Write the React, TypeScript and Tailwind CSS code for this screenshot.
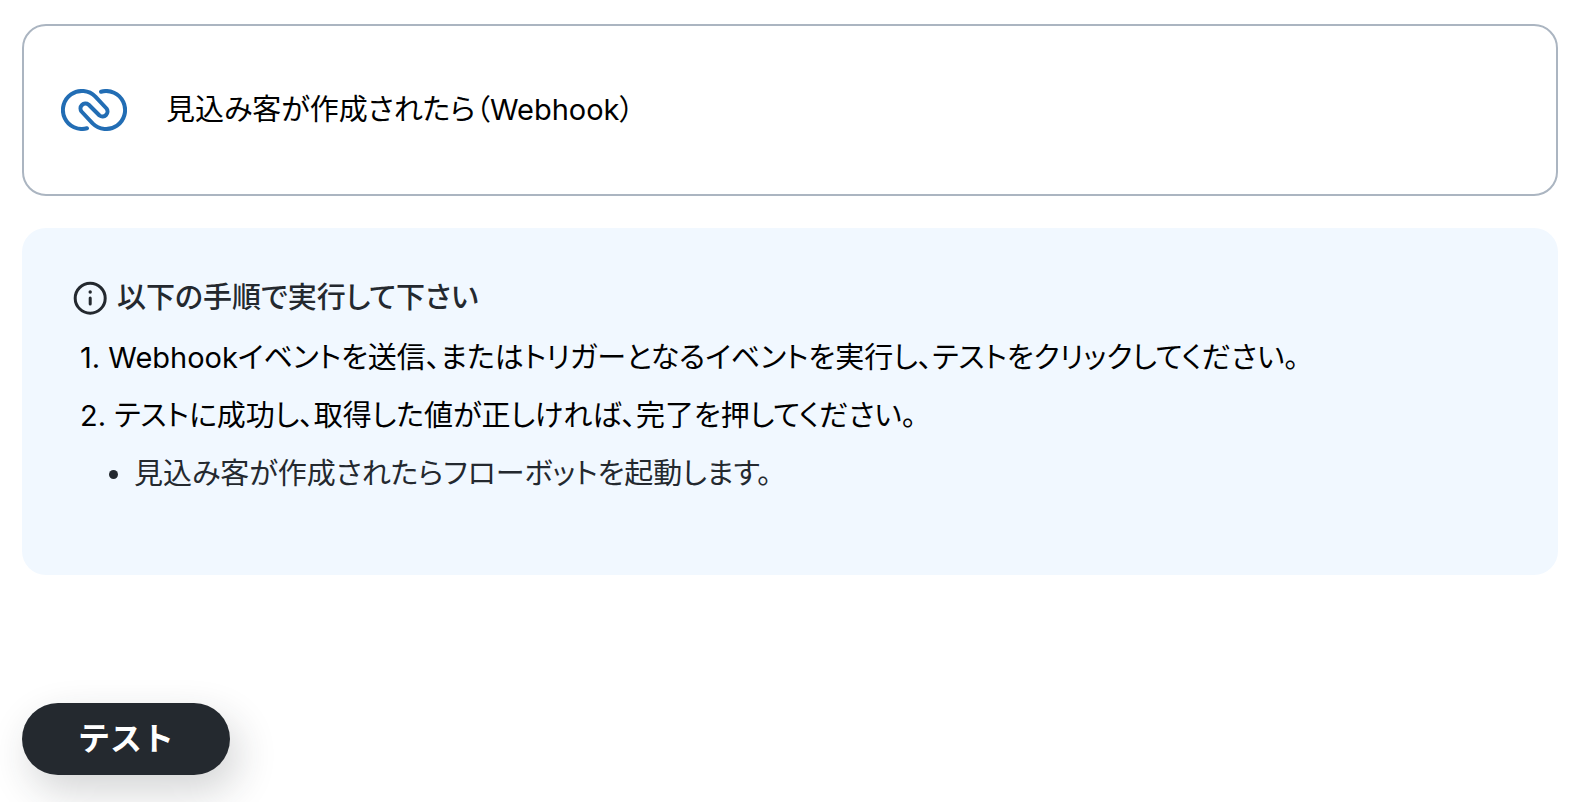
const LogoIcon = () => (
  <svg viewBox="11 9 66 42" className="h-[42px] w-[66px] shrink-0" fill="none" aria-hidden="true">
    <path
      d="M37 48.3A19 19 0 1 1 45.4 16.6L56.5 28.5A5 5 0 0 1 49.5 35.5L38.5 24.5A5 5 0 0 0 31.5 31.5L42.6 43.4A19 19 0 1 0 51 11.7"
      stroke="#226db4"
      strokeWidth="4"
      strokeLinecap="round"
      strokeLinejoin="round"
    />
  </svg>
);

const InfoIcon = () => (
  <svg viewBox="0 0 34 34" className="size-[34px] shrink-0" fill="none" aria-hidden="true">
    <circle cx="17.2" cy="17.2" r="15" stroke="#24292f" strokeWidth="3" />
    <circle cx="17.2" cy="11" r="1.7" fill="#24292f" />
    <path d="M17.2 17v6" stroke="#24292f" strokeWidth="3" strokeLinecap="round" />
  </svg>
);

export default function App() {
  return (
    <main className="bg-white pt-6 pr-[30px] pb-7 pl-[22px] font-['Inter','Noto_Sans_CJK_JP',sans-serif] text-[29px] leading-[44px] text-black [font-feature-settings:'palt']">
      <section className="flex items-center gap-[39px] rounded-3xl border-2 border-[#abb5c1] px-[37px] py-[62px]">
        <LogoIcon />
        <p>見込み客が作成されたら（Webhook）</p>
      </section>

      <section className="mt-8 rounded-3xl bg-[#f1f8ff] px-[51px] pt-12 pb-[79px]">
        <h2 className="flex items-center gap-[10px] font-medium text-[#24292f]">
          <InfoIcon />
          以下の手順で実行して下さい
        </h2>
        <ol className="mt-4 list-none space-y-[14px] pl-[7px]">
          <li>1. Webhookイベントを送信、またはトリガーとなるイベントを実行し、テストをクリックしてください。</li>
          <li>2. テストに成功し、取得した値が正しければ、完了を押してください。</li>
        </ol>
        <ul className="mt-[14px] pl-9 text-[#24292f]">
          <li className="flex items-center gap-4">
            <span className="size-[9px] shrink-0 rounded-full bg-[#24292f]" />
            見込み客が作成されたらフローボットを起動します。
          </li>
        </ul>
      </section>

      <button
        type="button"
        className="mt-32 h-[72px] rounded-full bg-[#24292f] px-14 text-[32px] font-bold text-white shadow-[8px_16px_40px_rgba(36,41,47,0.2)] [font-feature-settings:normal]"
      >
        テスト
      </button>
    </main>
  );
}
